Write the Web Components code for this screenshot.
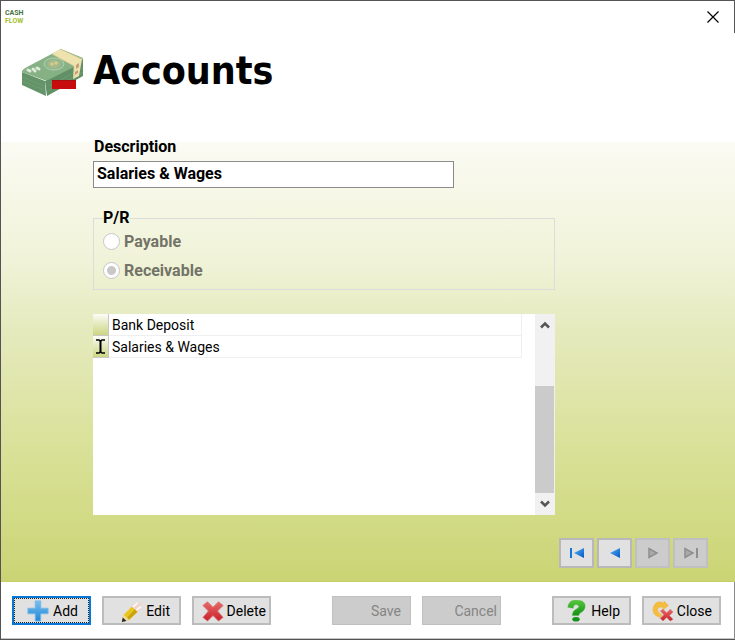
<!DOCTYPE html>
<html lang="en">
<head>
<meta charset="utf-8">
<title>Accounts</title>
<style>
  body {
    margin: 0;
    font-family: Roboto, "Liberation Sans", sans-serif;
    font-size: 14px;
    line-height: 16px;
    color: #000;
  }
</style>
</head>
<body>
<account-window>
  <title-bar slot="bar"></title-bar>
  <page-heading slot="heading">Accounts</page-heading>
  <account-form slot="content"></account-form>
  <record-list slot="content"></record-list>
  <record-nav slot="nav"></record-nav>
  <action-bar slot="actions"></action-bar>
</account-window>

<script>
/**
 * Base class: attaches an open shadow root and fills it from template().
 */
class BaseElement extends HTMLElement {
  constructor() {
    super();
    this.attachShadow({ mode: "open" });
  }

  connectedCallback() {
    this.shadowRoot.innerHTML = `
      <style>
        *, *::before { box-sizing: border-box; }
        button { font: inherit; color: inherit; padding: 0; margin: 0; }
        svg { display: block; }
      </style>
      ${this.template()}`;
  }
}

/** Window frame with the gradient work area. */
class AccountWindow extends BaseElement {
  template() {
    return `
      <style>
        :host {
          display: flex;
          flex-direction: column;
          box-sizing: border-box;
          min-height: 100vh;
          border: 1px solid #545454;
          border-right: 0;
          background: #fff;
        }
        main {
          flex: 1;
          display: flex;
          flex-direction: column;
          background: linear-gradient(#fbfbf3, #f0f3d8 27%, #e5eabd 43%, #d9e198 70%, #cbd474);
          border-bottom: 1px solid #c6d062;
        }
        .content {
          display: flex;
          flex-direction: column;
          gap: 24px;
          width: 63%;
          margin-left: 92px;
        }
        .nav {
          display: flex;
          justify-content: flex-end;
          margin-top: auto;
          padding: 20px 27px 13px 0;
        }
      </style>
      <slot name="bar"></slot>
      <slot name="heading"></slot>
      <main>
        <div class="content"><slot name="content"></slot></div>
        <div class="nav"><slot name="nav"></slot></div>
      </main>
      <slot name="actions"></slot>`;
  }
}
customElements.define("account-window", AccountWindow);

/** Caption strip: product mark and close button. */
class TitleBar extends BaseElement {
  template() {
    return `
      <style>
        :host {
          display: flex;
          justify-content: space-between;
          align-items: center;
          height: 32px;
          padding: 0 15px 0 4px;
          border-right: 1px solid #545454;
        }
        .mark {
          font: bold 7px/8px Roboto, sans-serif;
          color: #47723d;
        }
        .mark span { display: block; }
        .mark span + span { color: #a5c032; }
        button { border: 0; background: none; }
      </style>
      <div class="mark"><span>CASH</span><span>FLOW</span></div>
      <button type="button" aria-label="Close window">
        <svg width="12" height="12" viewBox="0 0 12 12"><path d="M.5.5l11 11M11.5.5l-11 11" stroke="#000" stroke-width="1.2"/></svg>
      </button>`;
  }
}
customElements.define("title-bar", TitleBar);

/** Large heading with the banknote stack. */
class PageHeading extends BaseElement {
  template() {
    return `
      <style>
        :host {
          display: flex;
          gap: 8px;
          height: 109px;
          padding: 14px 20px 0;
          box-sizing: border-box;
        }
        h1 {
          margin: 0;
          font: bold 39px/48px "DejaVu Sans Condensed", "Noto Sans", sans-serif;
        }
      </style>
      <svg width="64" height="52" viewBox="0 0 64 52">
        <path d="M1 25L24 34 25 49 1 38z" fill="#659369"/>
        <path d="M24 34L62 12V29L26 49z" fill="#628f66"/>
        <path d="M1 24Q2 22 6 20L40 2 62 11Q61 15 57 18L29 32Q26 34 23 33L1 25z" fill="#86b185"/>
        <path d="M1 30L23 39M1 34L23 43M28 39L62 21M28 43L62 25" stroke="#73a075" stroke-width=".7" fill="none"/>
        <path d="M31 7L39 2 61 12 58 29 52 32 53 19z" fill="#eee3ae"/>
        <path d="M31 7L53 19 53 32M39 2L60 12" stroke="#d5ca8e" stroke-width=".7" fill="none"/>
        <path d="M55 18l3-2v4l-3 2zM54 25l3-2v3l-3 2z" fill="#c79e7c"/>
        <ellipse cx="33" cy="17" rx="10" ry="6" fill="#8fb78d" stroke="#b4cdae"/>
        <ellipse cx="33" cy="17" rx="6" ry="4" fill="#a8b987"/>
        <path d="M29 17l2-2 2 2-2 2zM33 16l2-2 2 2-2 2z" fill="#d3cf91"/>
        <path d="M7 23l2 1M12 22l2 2M16 21l2 1" stroke="#dfebd9" stroke-width="3" stroke-linecap="round"/>
        <path d="M31 33h24v9H31z" fill="#c60c0c"/>
        <path d="M31 33h24v1H31z" fill="#a81010"/>
      </svg>
      <h1><slot></slot></h1>`;
  }
}
customElements.define("page-heading", PageHeading);

/** Description field and the P/R option group. */
class AccountForm extends BaseElement {
  template() {
    return `
      <style>
        :host { display: block; font-size: 16px; font-weight: bold; }
        .label { display: block; padding: 0 1px; margin-top: -4px; }
        form { padding-top: 1px; }
        input[type="text"] {
          width: 78%;
          height: 27px;
          margin: 6px 0 22px;
          padding: 0 4px 2px 3px;
          border: 1px solid #8b8b8b;
          border-radius: 0;
          background: #fff;
          font: inherit;
          color: inherit;
          display: block;
        }
        fieldset {
          margin: 0;
          padding: 1px 9px 4px;
          border: 1px solid #dcdcdc;
        }
        legend { padding: 0; color: #000; }
        .option {
          display: flex;
          align-items: center;
          gap: 4px;
          height: 29px;
          color: #737368;
        }
        input[type="radio"] {
          appearance: none;
          width: 17px;
          height: 17px;
          margin: 0;
          border: 1px solid #c6c6c6;
          border-radius: 50%;
          background: #fff;
        }
        input[type="radio"]:checked {
          background: radial-gradient(circle, #c8c8c8 4px, #fff 5px);
        }
      </style>
      <form>
        <label class="label" for="description">Description</label>
        <input type="text" id="description" value="Salaries &amp; Wages">
        <fieldset>
          <legend>P/R</legend>
          <div class="option">
            <input type="radio" name="type" id="payable" disabled>
            <label for="payable">Payable</label>
          </div>
          <div class="option">
            <input type="radio" name="type" id="receivable" checked disabled>
            <label for="receivable">Receivable</label>
          </div>
        </fieldset>
      </form>`;
  }
}
customElements.define("account-form", AccountForm);

/** Account grid with its scroll bar. */
class RecordList extends BaseElement {
  template() {
    const rows = ["Bank Deposit", "Salaries &amp; Wages"];
    const cursor = `<svg width="9" height="15" viewBox="0 0 9 15"><path d="M0 1h3l1.500 1L6 1h3M0 14h3l1.500-1L6 14h3" fill="none" stroke="#000" stroke-width="1.500"/><path d="M4.500 2v11" stroke="#000" stroke-width="2"/></svg>`;
    return `
      <style>
        :host { display: flex; height: 201px; background: #fff; }
        .grid { flex: 1; padding-right: 13px; }
        table { width: 100%; border-collapse: separate; border-spacing: 0; }
        td {
          height: 22px;
          padding: 0 3px;
          border: solid #efefef;
          border-width: 0 1px 1px 0;
        }
        td.mark {
          width: 16px;
          padding: 0 3px;
          border-color: #c8c8c8;
          background: linear-gradient(#fdfdf8, #e3e8bb 50%, #cdd682);
        }
        .scroll {
          display: flex;
          flex-direction: column;
          width: 20px;
          background: #f1f1f1;
        }
        .scroll button {
          display: grid;
          place-items: center;
          height: 22px;
          border: 0;
          background: none;
        }
        .track { flex: 1; display: flex; flex-direction: column; justify-content: flex-end; }
        .thumb { height: 68%; margin-right: 1px; background: #cbcbcb; }
      </style>
      <div class="grid">
        <table>
          ${rows.map((name, i) => `<tr><td class="mark">${i === 1 ? cursor : ""}</td><td>${name}</td></tr>`).join("")}
        </table>
      </div>
      <div class="scroll">
        <button type="button" aria-label="Scroll up">
          <svg width="10" height="8" viewBox="0 0 10 8"><path d="M1 6.500L5 2.500l4 4" fill="none" stroke="#555" stroke-width="2.500"/></svg>
        </button>
        <div class="track"><div class="thumb"></div></div>
        <button type="button" aria-label="Scroll down">
          <svg width="10" height="8" viewBox="0 0 10 8"><path d="M1 1.500l4 4 4-4" fill="none" stroke="#555" stroke-width="2.500"/></svg>
        </button>
      </div>`;
  }
}
customElements.define("record-list", RecordList);

/** First / previous / next / last buttons. */
class RecordNav extends BaseElement {
  template() {
    const button = (label, shape, off) => `
      <button type="button" aria-label="${label}" ${off ? "disabled" : ""}>
        <svg width="16" height="12" viewBox="0 0 16 12">
          <defs><linearGradient id="g" x2="1" y2="1"><stop stop-color="#56b4f2"/><stop offset="1" stop-color="#0057c4"/></linearGradient></defs>
          ${shape}
        </svg>
      </button>`;
    return `
      <style>
        :host { display: flex; gap: 3px; }
        button {
          display: grid;
          place-items: center;
          width: 35px;
          height: 30px;
          border: 2px solid #b8b8b8;
          background: #e1e1e1;
        }
        button:disabled { background: #ccc; border-color: #c0c0c0; }
      </style>
      ${button("First", '<path d="M2 1v10" stroke="#1677d2" stroke-width="2"/><path d="M15 1v10L5 6z" fill="url(#g)"/>')}
      ${button("Previous", '<path d="M13 1v10L3 6z" fill="url(#g)"/>')}
      ${button("Next", '<path d="M4 1.500v9L12 6z" fill="#aaa" stroke="#8e8e8e" stroke-width="1.500"/>', true)}
      ${button("Last", '<path d="M2 1.500v9L10 6z" fill="#aaa" stroke="#8e8e8e" stroke-width="1.500"/><path d="M14 1v10" stroke="#8e8e8e" stroke-width="2"/>', true)}`;
  }
}
customElements.define("record-nav", RecordNav);

const ICONS = {
  add: `<path d="M9 1h6v8h8v6h-8v8H9v-8H1V9h8z" fill="url(#blue)" stroke="#75b7e8"/>`,
  edit: `<path d="M12 8l6-6 2 2 3-2 1 3-3 2 2 3-5 4z" fill="#f2d5cf"/>
    <path d="M14 8l5-5M18 11l5-4" stroke="#fff" stroke-width="1.500"/>
    <path d="M4 16l9-9 6 6-9 9-6 1z" fill="#eac51e"/><path d="M8 19l8-9 3 3-9 8z" fill="#c7a311"/>
    <path d="M3 15l7 7-8 2z" fill="#ecd9a8"/><path d="M3 19l4 4-5 1z" fill="#222"/>`,
  remove: `<path d="M6 2l6 6 6-6 5 4-6 6 6 7-5 4-6-6-6 6-5-4 6-7-6-6z" fill="url(#red)" stroke="#d77575"/>`,
  help: `<path d="M3 8Q4 0 12 0q10 0 10 7 0 4-5 7-2 1-2 3H8q0-5 4-7 3-1 3-3t-3-2q-3 0-3 4z" fill="url(#green)" stroke="#50b83c" stroke-width=".5"/><ellipse cx="12" cy="21" rx="4" ry="2.500" fill="#16911a"/>`,
  exit: `<path d="M8 2q3 0 5 2V1l5 5-6 5V8q-5-1-6 2 0 4 5 6l-2 3Q1 17 1 10q1-7 7-8z" fill="#f4bd3b" stroke="#e6ad37" stroke-width=".5"/>
    <path d="M12 10l4 4 4-4 3 3-4 4 4 4-3 2-4-4-4 4-3-3 4-4-4-4z" fill="url(#red)" stroke="#d77575" stroke-width=".5"/>`
};

/** One footer button; icon, disabled and active come in as attributes. */
class ActionButton extends BaseElement {
  template() {
    const icon = ICONS[this.getAttribute("icon")] || "";
    return `
      <style>
        :host { display: block; }
        button {
          display: flex;
          align-items: center;
          justify-content: flex-end;
          gap: 4px;
          width: 79px;
          height: 29px;
          padding-right: 9px;
          border: 2px solid #bcbcbc;
          background: #e1e1e1;
        }
        :host([compact]) button { padding-right: 3px; gap: 3px; }
        :host([medium]) button { padding-right: 7px; gap: 3px; }
        :host([active]) button {
          border-color: #0878d7;
          outline: 1px dotted #222;
          outline-offset: -3px;
          padding-right: 11px;
        }
        button:disabled { color: #858585; background: #ccc; border: 1px solid #c0c0c0; }
      </style>
      <button type="button" ${this.hasAttribute("disabled") ? "disabled" : ""}>
        ${icon && `<svg width="22" height="22" viewBox="0 0 24 24">
          <defs>
            <linearGradient id="blue" x2="0" y2="1"><stop stop-color="#78c1ee"/><stop offset="1" stop-color="#2185d5"/></linearGradient>
            <linearGradient id="red" x2="0" y2="1"><stop stop-color="#e86a6a"/><stop offset="1" stop-color="#c91f29"/></linearGradient>
            <linearGradient id="green" x2="0" y2="1"><stop stop-color="#57c83c"/><stop offset="1" stop-color="#128f17"/></linearGradient>
          </defs>
          ${icon}
        </svg>`}
        <span><slot></slot></span>
      </button>`;
  }
}
customElements.define("action-button", ActionButton);

/** Footer with three groups of buttons. */
class ActionBar extends BaseElement {
  template() {
    return `
      <style>
        :host {
          display: flex;
          padding: 14px 13px 13px 11px;
          border-right: 1px solid #8a8a8a;
          border-bottom: 1px solid #c4c4c4;
        }
        .group { display: flex; gap: 11px; }
        .group:first-of-type { margin-right: 61px; }
        .group:last-of-type { margin-left: auto; }
      </style>
      <div class="group">
        <action-button icon="add" active>Add</action-button>
        <action-button icon="edit">Edit</action-button>
        <action-button icon="remove" compact>Delete</action-button>
      </div>
      <div class="group">
        <action-button disabled>Save</action-button>
        <action-button disabled compact>Cancel</action-button>
      </div>
      <div class="group">
        <action-button icon="help">Help</action-button>
        <action-button icon="exit" medium>Close</action-button>
      </div>`;
  }
}
customElements.define("action-bar", ActionBar);
</script>
</body>
</html>
